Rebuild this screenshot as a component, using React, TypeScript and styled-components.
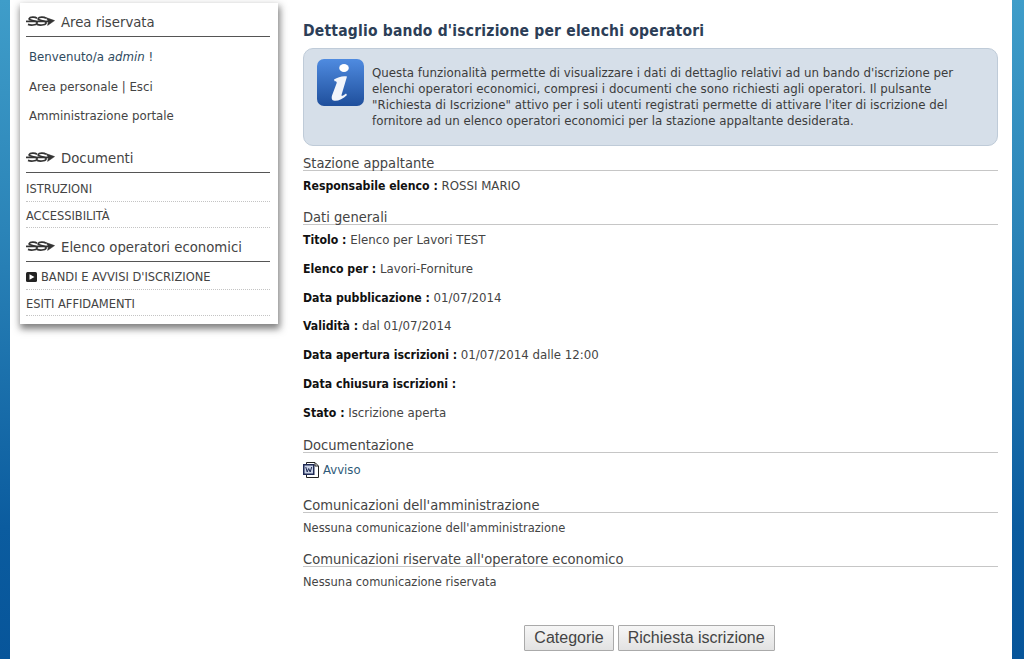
import React from "react";
import styled, { createGlobalStyle } from "styled-components";

const GlobalStyle = createGlobalStyle`
html, body {
  margin: 0;
  padding: 0;
  height: 659px;
  overflow: hidden;
  background: linear-gradient(180deg, #3f9dc9 0%, #2b84b8 35%, #0b5c9f 80%, #07559a 100%);
  font-family: "DejaVu Sans Condensed", "DejaVu Sans", sans-serif;
  font-stretch: condensed;
}
`;

const Page = styled.div`
margin: 0 12px 0 10px;
height: 659px;
background: #fff;
display: flex;
align-items: flex-start;
padding: 3px 14px 0 10px;
box-sizing: border-box;
overflow: hidden;
`;

const Sidebar = styled.aside`
width: 258px;
flex-shrink: 0;
box-sizing: border-box;
padding: 0 8px 8px 6px;
background: #fff;
box-shadow: 1px 4px 7px 1px rgba(60, 60, 60, 0.65);
`;

const SideHeading = styled.h3<{ $top?: number }>`
margin: ${(p) => p.$top ?? 0}px 0 0 0;
height: 29px;
padding-top: 4px;
display: flex;
align-items: center;
gap: 6px;
border-bottom: 1px solid #555;
font-size: 14.75px;
font-weight: normal;
color: #444;
`;

const UserLinks = styled.div`
padding: 6px 0 0 3px;
`;

const UserLine = styled.div`
height: 29.5px;
line-height: 28px;
font-size: 13.1px;
color: #444;
em { font-style: italic; }
`;

const Welcome = styled(UserLine)`
color: #2f4a5e;
`;

const MenuItem = styled.div<{ $height?: number }>`
height: ${(p) => p.$height ?? 26}px;
display: flex;
align-items: center;
gap: 4px;
font-size: 12.75px;
color: #444;
border-bottom: 1px dotted #c4c4c4;
padding-top: 3px;
box-sizing: border-box;
`;

const Main = styled.main`
flex: 1;
margin-left: 25px;
min-width: 0;
`;

const Title = styled.h1`
margin: 0;
height: 45px;
line-height: 56px;
font-size: 15.5px;
font-weight: bold;
color: #2c3e57;
letter-spacing: 0.2px;
`;

const InfoBox = styled.div`
height: 98px;
box-sizing: border-box;
display: flex;
align-items: flex-start;
padding: 10px 13px;
gap: 8px;
background: #d6dfe9;
border: 1px solid #bfcbd8;
border-radius: 10px;
svg { flex-shrink: 0; }
`;

const InfoText = styled.p`
margin: 6px 0 0 0;
max-width: 590px;
font-size: 13.15px;
line-height: 16px;
color: #3c3c3c;
`;

const SectionTitle = styled.h2<{ $top: number }>`
margin: ${(p) => p.$top}px 0 0 0;
height: 16px;
line-height: 17px;
font-size: 14.55px;
font-weight: normal;
color: #444;
border-bottom: 1px solid #c6c6c6;
`;

const Field = styled.div`
height: 28.8px;
line-height: 30px;
font-size: 13.1px;
color: #444;
b { color: #111; font-weight: bold; font-size: 12.2px; }
`;

const PlainText = styled.div`
height: 30px;
line-height: 30px;
font-size: 12.75px;
color: #444;
`;

const DocLink = styled.a`
display: flex;
align-items: center;
gap: 4px;
height: 34px;
font-size: 13px;
color: #2f5a78;
text-decoration: none;
`;

const Actions = styled.div`
margin-top: 28px;
display: flex;
justify-content: center;
gap: 4px;
padding-right: 2px;
`;

const Button = styled.button`
height: 26px;
padding: 0 9px;
font-family: "Liberation Sans", Arial, sans-serif;
font-size: 16px;
color: #444;
background: linear-gradient(180deg, #f6f6f6, #e2e2e2);
border: 1px solid #aaa;
border-radius: 1px;
`;

const Knot = () => (
  <svg width="29" height="11" viewBox="0 0 29 11" fill="none" stroke="#333" strokeWidth="1.7">
    <path d="M11 2.2C9 .8 4 .8 3.2 2.6C2.4 4.4 10 4.4 11 6.4C12 8.4 6 10 2 8.4" />
    <path d="M20 2.2C18 .8 13 .8 12.2 2.6C11.4 4.4 19 4.4 20 6.4C21 8.4 15 10 11 8.4" />
    <path d="M0 5.4H23" />
    <path d="M20 1.6L28.6 4.6L21.6 9.4L22.4 5.4Z" fill="#333" strokeWidth="0.5" />
  </svg>
);

const PlayIcon = () => (
  <svg width="11" height="10" viewBox="0 0 11 10">
    <rect width="11" height="10" rx="1.5" fill="#222" />
    <path d="M3.5 2.2L8.5 5L3.5 7.8Z" fill="#fff" />
  </svg>
);

const InfoIcon = () => (
  <svg width="47" height="47" viewBox="0 0 47 47">
    <defs>
      <linearGradient id="infobg" x1="0" y1="0" x2="0" y2="1">
        <stop offset="0" stopColor="#4f8be0" />
        <stop offset="1" stopColor="#1f4f9c" />
      </linearGradient>
    </defs>
    <rect width="47" height="47" rx="7" fill="url(#infobg)" />
    <ellipse cx="27" cy="9" rx="4.8" ry="4" fill="#fff" />
    <path d="M17 20.5C21 18 26 16.5 30 17.5L24.5 36C24.2 37.5 26 37 29 34.5L30 36C25.5 40.5 20 42.5 16.5 41.5C14.3 40.8 14.5 38 15.2 36L19.7 24C20 22.5 18.8 22 17.6 22.2Z" fill="#f2f5fb" />
  </svg>
);

const WordIcon = () => (
  <svg width="16" height="16" viewBox="0 0 16 16">
    <path d="M3.5 .5H12L15.5 4V15.5H3.5Z" fill="#fff" stroke="#222" />
    <rect x="0" y="2" width="11.5" height="11" fill="#1f2a55" />
    <rect x="1.5" y="3.5" width="8.5" height="8" fill="#c9d2e6" />
    <path d="M2.8 5L4.2 10L5.7 6.5L7.2 10L8.7 5" fill="none" stroke="#1f2a55" strokeWidth="1" />
    <path d="M12 1V4H15" fill="none" stroke="#222" />
  </svg>
);

const App = () => {
  return (
    <>
      <GlobalStyle />
      <Page>
        <Sidebar>
          <SideHeading><Knot />Area riservata</SideHeading>
          <UserLinks>
            <Welcome>Benvenuto/a <em>admin</em> !</Welcome>
            <UserLine>Area personale | Esci</UserLine>
            <UserLine>Amministrazione portale</UserLine>
          </UserLinks>
          <SideHeading $top={7}><Knot />Documenti</SideHeading>
          <MenuItem $height={29}>ISTRUZIONI</MenuItem>
          <MenuItem>ACCESSIBILITÀ</MenuItem>
          <SideHeading><Knot />Elenco operatori economici</SideHeading>
          <MenuItem $height={28}><PlayIcon />BANDI E AVVISI D'ISCRIZIONE</MenuItem>
          <MenuItem>ESITI AFFIDAMENTI</MenuItem>
        </Sidebar>
        <Main>
          <Title>Dettaglio bando d'iscrizione per elenchi operatori</Title>
          <InfoBox>
            <InfoIcon />
            <InfoText>
              Questa funzionalità permette di visualizzare i dati di dettaglio relativi ad un bando d'iscrizione per
              elenchi operatori economici, compresi i documenti che sono richiesti agli operatori. Il pulsante
              "Richiesta di Iscrizione" attivo per i soli utenti registrati permette di attivare l'iter di iscrizione del
              fornitore ad un elenco operatori economici per la stazione appaltante desiderata.
            </InfoText>
          </InfoBox>
          <SectionTitle $top={8}>Stazione appaltante</SectionTitle>
          <Field><b>Responsabile elenco :</b> ROSSI MARIO</Field>
          <SectionTitle $top={8.2}>Dati generali</SectionTitle>
          <Field><b>Titolo :</b> Elenco per Lavori TEST</Field>
          <Field><b>Elenco per :</b> Lavori-Forniture</Field>
          <Field><b>Data pubblicazione :</b> 01/07/2014</Field>
          <Field><b>Validità :</b> dal 01/07/2014</Field>
          <Field><b>Data apertura iscrizioni :</b> 01/07/2014 dalle 12:00</Field>
          <Field><b>Data chiusura iscrizioni :</b></Field>
          <Field><b>Stato :</b> Iscrizione aperta</Field>
          <SectionTitle $top={9.4}>Documentazione</SectionTitle>
          <DocLink href="#"><WordIcon />Avviso</DocLink>
          <SectionTitle $top={9}>Comunicazioni dell'amministrazione</SectionTitle>
          <PlainText>Nessuna comunicazione dell'amministrazione</PlainText>
          <SectionTitle $top={7}>Comunicazioni riservate all'operatore economico</SectionTitle>
          <PlainText>Nessuna comunicazione riservata</PlainText>
          <Actions>
            <Button>Categorie</Button>
            <Button>Richiesta iscrizione</Button>
          </Actions>
        </Main>
      </Page>
    </>
  );
};

export default App;
